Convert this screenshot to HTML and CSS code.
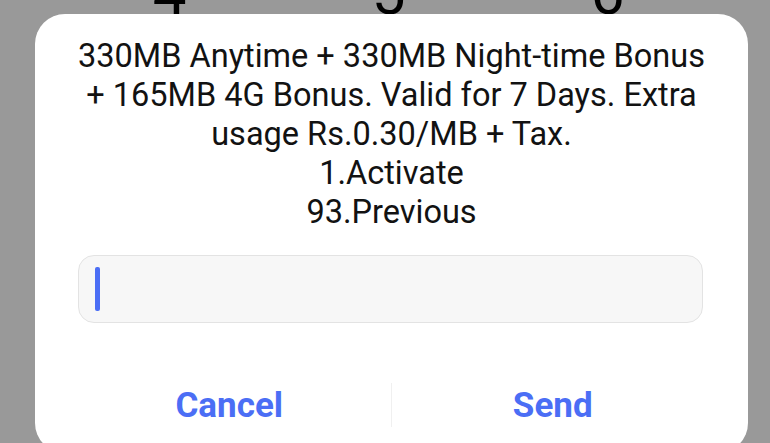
FILE: index.html
```html
<!DOCTYPE html>
<html lang="en">
<head>
    <meta charset="UTF-8">
    <meta name="viewport" content="width=device-width, initial-scale=1.0">
    <title>USSD</title>

    <link rel="stylesheet" href="styles.css">
</head>
<body>
    <!-- dialer keys sitting behind the popup -->
    <div class="keypad">
        <span class="key">4</span>
        <span class="key">5</span>
        <span class="key">6</span>
    </div>

    <div class="dialog">
        <p class="message">
            330MB Anytime + 330MB Night-time Bonus<br>
            + 165MB 4G Bonus. Valid for 7 Days. Extra<br>
            usage Rs.0.30/MB + Tax.<br>
            1.Activate<br>
            93.Previous
        </p>
        <div class="reply">
            <span class="caret"></span>
        </div>
        <div class="actions">
            <button class="action">Cancel</button>
            <span class="divider"></span>
            <button class="action">Send</button>
        </div>
    </div>
</body>
</html>
```

FILE: styles.css
```css
html, body {
    margin: 0;
    height: 100%;
    overflow: hidden;
}
body {
    font-family: Roboto, "Noto Sans", sans-serif;
    background-color: #999999;
}
.keypad {
    display: grid;
    grid-template-columns: repeat(3, 219px);
    margin: -36px 0 0 60px;
}
.key {
    text-align: center;
    font-size: 60px;
    line-height: 60px;
    color: #000;
}
.dialog {
    position: absolute;
    top: 14px;
    left: 35px;
    width: 713px;
    height: 439px;
    box-sizing: border-box;
    padding: 23px 44px 0 44px;
    background: #fff;
    border-radius: 30px;
}
.message {
    margin: 0 -10px;
    text-align: center;
    font-size: 32.5px;
    line-height: 39px;
    color: #121212;
}
.reply {
    display: flex;
    align-items: center;
    height: 68px;
    box-sizing: border-box;
    margin: 23px 1px 0 -1px;
    padding-left: 16px;
    background: #f7f7f7;
    border: 1px solid #e3e3e3;
    border-radius: 16px;
}
.caret {
    width: 5px;
    height: 44px;
    border-radius: 2px;
    background: #4b6ef5;
}
.actions {
    display: flex;
    align-items: center;
    height: 60px;
    margin: 52px -10px 0 -11px;
}
.action {
    flex: 1;
    padding: 0;
    border: none;
    background: none;
    font-family: Roboto, sans-serif;
    font-size: 35px;
    font-weight: bold;
    color: #4b6ef5;
}
.divider {
    width: 1px;
    height: 44px;
    background: #f0f0f0;
}
```
